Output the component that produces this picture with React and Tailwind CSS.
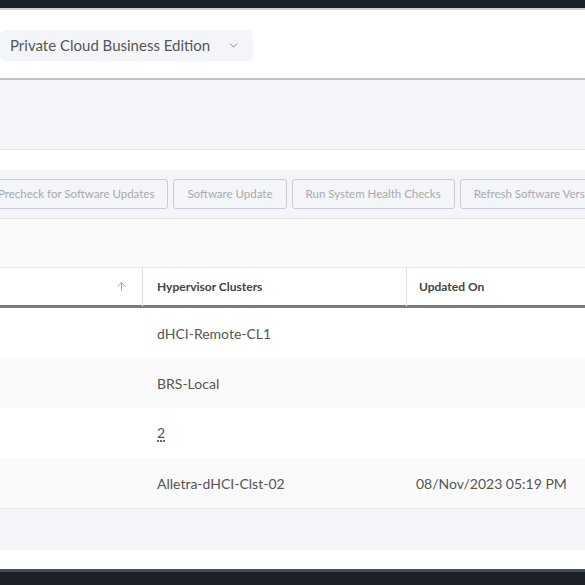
import { ChevronDown, ArrowUp } from 'lucide-react';

const actions = [
  { label: 'Precheck for Software Updates', cls: 'ml-[-16px]' },
  { label: 'Software Update', cls: '' },
  { label: 'Run System Health Checks', cls: '' },
  { label: 'Refresh Software Versions', cls: '' },
];

const rows = [
  { cluster: 'dHCI-Remote-CL1', updated: '' },
  { cluster: 'BRS-Local', updated: '' },
  { cluster: '2', updated: '', dotted: true },
  { cluster: 'Alletra-dHCI-Clst-02', updated: '08/Nov/2023 05:19 PM' },
];

export default function App() {
  return (
    <div className="w-[585px] h-[585px] overflow-hidden bg-white flex flex-col font-['Lato','Liberation_Sans',sans-serif]">
      <div className="h-[8px] bg-[#1b2029] shrink-0" />
      <div className="h-[2px] bg-[#cfd0d2] shrink-0" />

      <div className="h-[70px] shrink-0 flex items-center border-b-2 border-[#c4c4c4]">
        <div className="h-[31px] w-[253px] mt-[2px] rounded-[6px] bg-[#f4f5f8] flex items-center pl-[10px] gap-[17px] text-[15px] text-[#555]">
          <span>Private Cloud Business Edition</span>
          <ChevronDown size={13} strokeWidth={1.6} className="text-[#777]" />
        </div>
      </div>

      <div className="h-[70px] shrink-0 bg-[#f4f5f9] border-b border-[#e4e5e8]" />
      <div className="h-[20px] shrink-0 bg-white" />

      <div className="h-[49px] shrink-0 bg-[#f4f5f8] border-b border-[#e1e2e5] flex items-center gap-[5px] overflow-hidden">
        {actions.map((a) => (
          <button
            key={a.label}
            className={`${a.cls} h-[30px] shrink-0 rounded-[3px] border border-[#c8ccd2] bg-[#f4f5f8] px-[13px] text-[11.5px] text-[#a6a9ae] whitespace-nowrap`}
          >
            {a.label}
          </button>
        ))}
      </div>

      <div className="h-[49px] shrink-0 bg-[#fafafa] border-b border-[#e6e6e6]" />

      <div className="shrink-0 grid grid-cols-[143px_264px_1fr]">
        <div className="h-[40px] border-r border-[#dedede] flex items-center justify-end pr-[14px] border-b-[3px] border-b-[#7a7a7a]">
          <ArrowUp size={13} strokeWidth={1.4} className="text-[#888]" />
        </div>
        <div className="h-[40px] border-r border-[#dedede] flex items-center pl-[14px] text-[12px] font-bold text-[#444] border-b-[3px] border-b-[#7a7a7a]">
          Hypervisor Clusters
        </div>
        <div className="h-[40px] flex items-center pl-[12px] text-[12px] font-bold text-[#444] border-b-[3px] border-b-[#7a7a7a]">
          Updated On
        </div>

        {rows.map((r, i) => (
          <div key={i} className="contents">
            <div className={`h-[50px] ${i % 2 ? 'bg-[#fafafa]' : 'bg-white'}`} />
            <div className={`h-[50px] flex items-center pl-[14px] text-[14px] text-[#555] ${i % 2 ? 'bg-[#fafafa]' : 'bg-white'}`}>
              {r.dotted ? (
                <span className="border-b-2 border-dotted border-[#666] leading-[15px]">{r.cluster}</span>
              ) : (
                r.cluster
              )}
            </div>
            <div className={`h-[50px] flex items-center pl-[9px] text-[14px] text-[#555] ${i % 2 ? 'bg-[#fafafa]' : 'bg-white'}`}>
              {r.updated}
            </div>
          </div>
        ))}
      </div>

      <div className="h-[42px] shrink-0 bg-[#f4f5f8] border-t border-[#e8e8e8]" />
      <div className="h-[19px] shrink-0 bg-white" />
      <div className="h-[3px] shrink-0 bg-[#4a4d52]" />
      <div className="flex-1 bg-[#1c2028]" />
    </div>
  );
}
